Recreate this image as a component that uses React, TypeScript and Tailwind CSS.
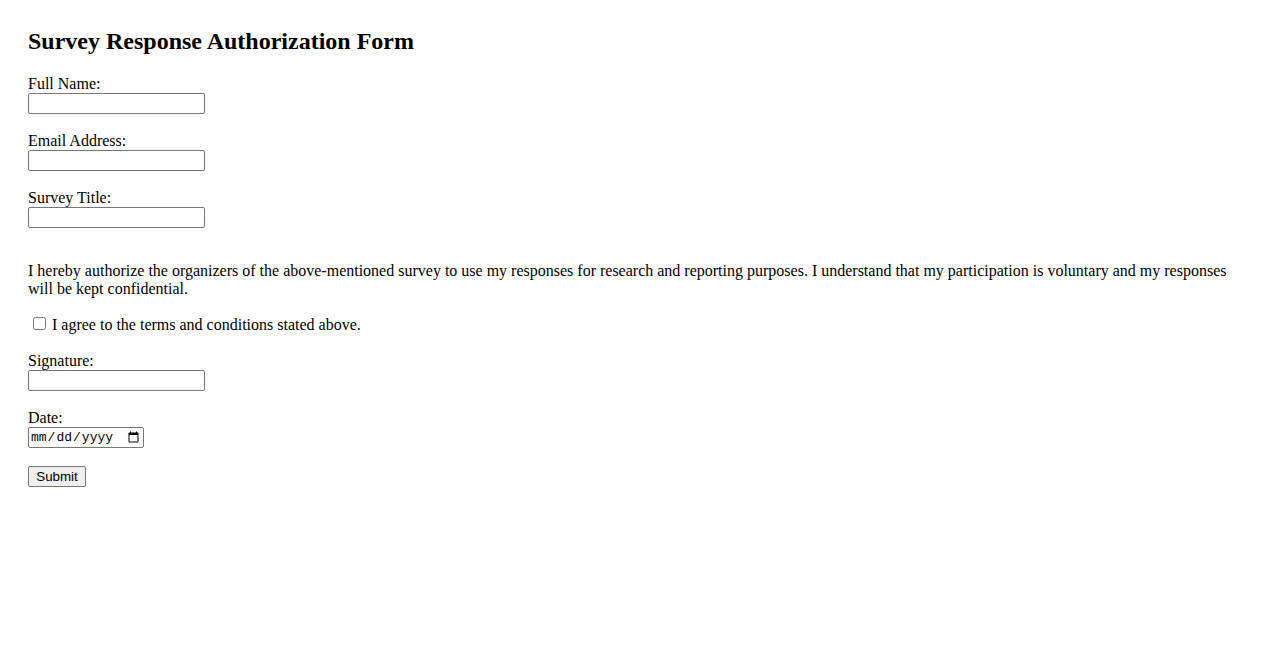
export default function App() {
  const serif = "font-['Liberation_Serif','Times_New_Roman',serif]";

  return (
    <div className={`${serif} min-h-screen bg-white px-[28px] pt-[27px] text-[16px] leading-[18px] text-black`}>
      <h2 className="text-[24px] font-bold leading-[28px]">Survey Response Authorization Form</h2>

      <form className="mt-[19px] flex flex-col items-start" onSubmit={(e) => e.preventDefault()}>
        <Field label="Full Name:" id="fullName" />
        <Field label="Email Address:" id="email" type="email" />
        <Field label="Survey Title:" id="surveyTitle" last />

        <p className="mt-[34px] w-full">
          I hereby authorize the organizers of the above-mentioned survey to use my responses for research and reporting
          purposes. I understand that my participation is voluntary and my responses will be kept confidential.
        </p>

        <label className="mt-[17px] flex h-[19px] items-start">
          <input type="checkbox" className="ml-[5px] mr-[6px] mt-[2px] h-[13px] w-[13px]" />
          <span className="pt-[1px]">I agree to the terms and conditions stated above.</span>
        </label>

        <div className="mt-[17px] flex flex-col">
          <Field label="Signature:" id="signature" />
          <label htmlFor="date" className="block h-[19px] pt-[1px]">
            Date:
          </label>
          <input
            id="date"
            type="date"
            className="h-[21px] w-[116px] rounded-[2px] border border-[#767676] px-[1px] font-['Liberation_Mono',monospace] text-[13px] leading-[19px]"
          />
        </div>

        <button
          type="submit"
          className="mt-[18px] h-[21px] w-[58px] rounded-[2px] border border-[#767676] bg-[#efefef] font-['Liberation_Sans',Arial,sans-serif] text-[13.33px] leading-[19px]"
        >
          Submit
        </button>
      </form>
    </div>
  );
}

function Field({ label, id, type = "text", last }: { label: string; id: string; type?: string; last?: boolean }) {
  return (
    <div className={last ? "" : "mb-[17px]"}>
      <label htmlFor={id} className="block h-[19px] pt-[1px]">
        {label}
      </label>
      <input
        id={id}
        type={type}
        className="block h-[21px] w-[177px] rounded-[2px] border border-[#767676] px-[2px] text-[13px]"
      />
    </div>
  );
}
